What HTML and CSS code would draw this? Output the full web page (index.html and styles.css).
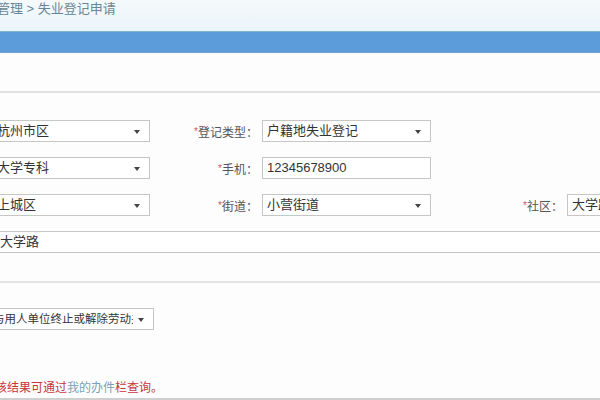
FILE: index.html
```html
<!DOCTYPE html>
<html lang="zh">
<head>
  <meta charset="UTF-8">
  <title>失业登记申请</title>
  <link rel="stylesheet" href="styles.css">
</head>
<body>
  <div class="crumb">管理 &gt; 失业登记申请</div>
  <div class="title-bar"></div>
  <div class="top-space"></div>

  <div class="form">
    <div class="row">
      <div class="field first select"><span>杭州市区</span><i class="arrow"></i></div>
      <label class="lbl"><em>*</em>登记类型：</label>
      <div class="field mid select"><span>户籍地失业登记</span><i class="arrow"></i></div>
    </div>
    <div class="row">
      <div class="field first select"><span>大学专科</span><i class="arrow"></i></div>
      <label class="lbl"><em>*</em>手机：</label>
      <div class="field mid"><span>12345678900</span></div>
    </div>
    <div class="row">
      <div class="field first select"><span>上城区</span><i class="arrow"></i></div>
      <label class="lbl"><em>*</em>街道：</label>
      <div class="field mid select"><span>小营街道</span><i class="arrow"></i></div>
      <label class="lbl wide"><em>*</em>社区：</label>
      <div class="field last"><span>大学路</span></div>
    </div>
    <div class="row">
      <div class="field address"><span>大学路</span></div>
    </div>
  </div>

  <div class="divider"></div>

  <div class="reason">
    <div class="field reason-select select"><span class="clip">与用人单位终止或解除劳动关系</span><i class="arrow"></i></div>
  </div>

  <p class="notice">审核结果可通过<span class="link">我的办件</span>栏查询。</p>
</body>
</html>
```

FILE: styles.css
```css
* {
  box-sizing: border-box;
}
body {
  margin: 0;
  background: #fdfdfd;
  color: #333;
  font-family: "Liberation Sans", "Noto Sans CJK SC", sans-serif;
  overflow: hidden;
  height: 400px;
  border-bottom: 2px solid #cfcfcf;
}
.crumb {
  height: 31px;
  padding: 1px 0 0 0;
  margin-left: -3px;
  font-size: 13px;
  line-height: 16px;
  color: #6a8694;
  background: linear-gradient(#f5f9fb, #eaf5fa);
}
.title-bar {
  height: 22px;
  background: #5d9cda;
  border-top: 1px solid #7fb3cf;
  border-bottom: 1px solid #6fa2d6;
}
.top-space {
  height: 40px;
  border-bottom: 2px solid #e2e2e2;
}
.form {
  padding: 27px 0 13px;
}
.row {
  display: flex;
  align-items: center;
  height: 22px;
  margin-bottom: 15px;
}
.row:last-child {
  margin-bottom: 15px;
}
.field {
  position: relative;
  flex-shrink: 0;
  height: 22px;
  border: 1px solid #c6c6c6;
  background: #fff;
  font-size: 13px;
  line-height: 20px;
  padding-left: 4px;
  white-space: nowrap;
  overflow: hidden;
}
.first {
  width: 164px;
  margin-left: -14px;
  padding-left: 10px;
}
.mid {
  width: 169px;
}
.last {
  width: 60px;
}
.address {
  width: 640px;
  margin-left: -20px;
  padding-left: 20px;
  border-left: none;
  border-right: none;
}
.arrow {
  position: absolute;
  right: 9px;
  top: 9px;
  border-left: 3px solid transparent;
  border-right: 3px solid transparent;
  border-top: 4px solid #444;
}
.lbl {
  flex-shrink: 0;
  width: 112px;
  padding-right: 4px;
  text-align: right;
  font-size: 12px;
  color: #555;
  white-space: nowrap;
}
.lbl.wide {
  width: 136px;
}
.lbl em {
  font-style: normal;
  color: #d25a5a;
  font-size: 10px;
  vertical-align: 2px;
}
.divider {
  height: 2px;
  background: #e4e4e4;
}
.reason {
  padding-top: 25px;
}
.reason-select {
  width: 168px;
  margin-left: -14px;
  padding-left: 6px;
}
.reason-select .clip {
  display: inline-block;
  width: 140px;
  overflow: hidden;
  font-size: 11.5px;
  vertical-align: top;
}
.notice {
  margin: 48px 0 0 -17px;
  font-size: 12px;
  color: #c8373c;
}
.link {
  color: #7a9fb6;
}
```
